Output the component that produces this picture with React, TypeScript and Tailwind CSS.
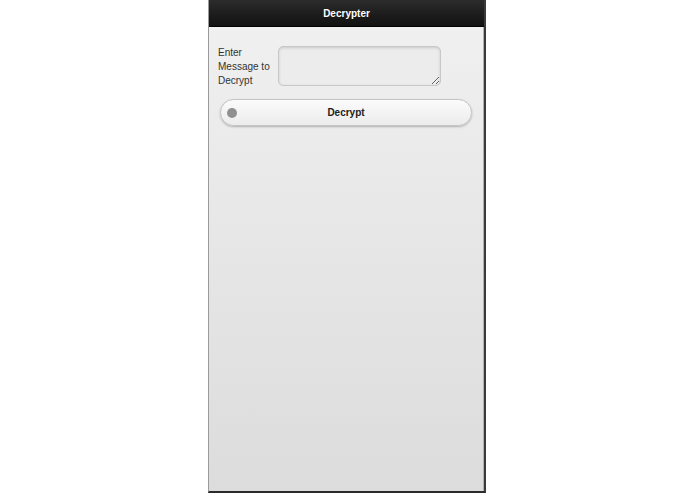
export default function App() {
  return (
    <div className="w-[695px] h-[494px] bg-white flex justify-center" style={{ fontFamily: '"Liberation Sans", Arial, sans-serif' }}>
      <div className="ml-[-1px] w-[278px] h-[493px] flex flex-col border-l border-[#9a9a9a] border-r-2 border-r-[#3a3a3a] border-b-2 border-b-[#2a2a2a] bg-gradient-to-b from-[#f1f1f1] to-[#dcdcdc]">
        {/* Header */}
        <div className="h-[27px] shrink-0 bg-gradient-to-b from-[#2c2c2c] to-[#111111] flex items-center justify-center border-b border-[#000]">
          <span className="text-white text-[10px] font-bold">Decrypter</span>
        </div>

        <div className="flex-1 border-r border-[#b0b0b0] px-[11px] pt-[19px]">
          {/* Message row */}
          <div className="flex items-start">
            <label className="w-[57px] ml-[-2px] text-[10px] leading-[14px] text-[#333] whitespace-nowrap">
              Enter<br />Message to<br />Decrypt
            </label>
            <textarea
              className="w-[163px] h-[40px] ml-[3px] rounded-[5px] border border-[#c8c8c8] bg-[#ececec] shadow-[inset_0_1px_3px_rgba(0,0,0,0.15)] resize-y outline-none text-[10px] p-1"
            />
          </div>

          {/* Decrypt button */}
          <button className="mt-[11px] w-[252px] h-[27px] rounded-full border border-[#c4c4c4] bg-gradient-to-b from-[#fbfbfb] to-[#ececec] shadow-[0_1px_2px_rgba(0,0,0,0.25)] relative flex items-center justify-center">
            <span className="absolute left-[6px] top-1/2 -translate-y-1/2 w-[10px] h-[10px] rounded-full bg-[#909090]" />
            <span className="text-[10px] font-bold text-[#222]">Decrypt</span>
          </button>
        </div>
      </div>
    </div>
  );
}
